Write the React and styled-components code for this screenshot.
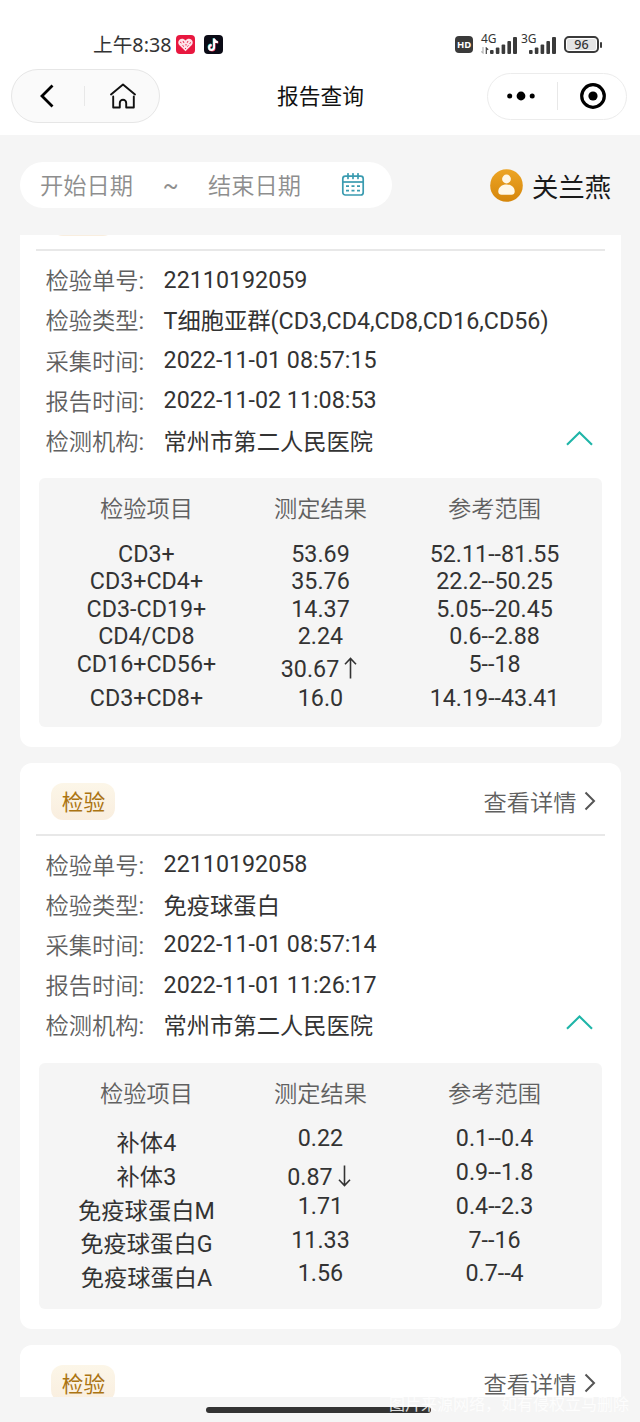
import React from 'react'
import styled, { createGlobalStyle } from 'styled-components';


const reports = [
  {
    no: '22110192059',
    type: 'T细胞亚群(CD3,CD4,CD8,CD16,CD56)',
    collected: '2022-11-01 08:57:15',
    reported: '2022-11-02 11:08:53',
    org: '常州市第二人民医院',
    items: [
      { name: 'CD3+', value: '53.69', range: '52.11--81.55' },
      { name: 'CD3+CD4+', value: '35.76', range: '22.2--50.25' },
      { name: 'CD3-CD19+', value: '14.37', range: '5.05--20.45' },
      { name: 'CD4/CD8', value: '2.24', range: '0.6--2.88' },
      { name: 'CD16+CD56+', value: '30.67', flag: 'up', range: '5--18' },
      { name: 'CD3+CD8+', value: '16.0', range: '14.19--43.41' },
    ],
  },
  {
    no: '22110192058',
    type: '免疫球蛋白',
    collected: '2022-11-01 08:57:14',
    reported: '2022-11-01 11:26:17',
    org: '常州市第二人民医院',
    items: [
      { name: '补体4', cjk: true, value: '0.22', range: '0.1--0.4' },
      { name: '补体3', cjk: true, value: '0.87', flag: 'down', range: '0.9--1.8' },
      { name: '免疫球蛋白M', cjk: true, value: '1.71', range: '0.4--2.3' },
      { name: '免疫球蛋白G', cjk: true, value: '11.33', range: '7--16' },
      { name: '免疫球蛋白A', cjk: true, value: '1.56', range: '0.7--4' },
    ],
  },
]

function Signal() {
  return (
    <svg width="27" height="17" viewBox="0 0 27 17" fill="#3a3a3a">
      <rect x="0" y="13" width="3.6" height="4" rx="1" />
      <rect x="5.8" y="10.5" width="3.6" height="6.5" rx="1" />
      <rect x="11.6" y="7.5" width="3.6" height="9.5" rx="1" />
      <rect x="17.4" y="4" width="3.6" height="13" rx="1" />
      <rect x="23" y="0" width="4" height="17" rx="1" />
    </svg>
  )
}

function StatusBar() {
  return (
    <Status>
      <Time>上午8:38</Time>
      <svg width="19" height="19" viewBox="0 0 19 19">
        <rect width="19" height="19" rx="4" fill="#e8173f" />
        <path d="M9.5 16.2 3.4 10.3C1.8 8.5 1.9 6 3.5 4.7c1.8-1.5 4.5-1.1 6 .9 1.5-2 4.2-2.4 6-.9 1.6 1.3 1.7 3.8.1 5.6z" fill="#fde3e8" />
        <path d="M4 7l1.5 1M7 6l1 2M12 6l-.8 1.800M15 7.500l-1.5 1M6.500 10.500l1.5 1M10 9v1.5M12.500 10.500l-1.2 1M9.500 13v1" stroke="#e8173f" strokeWidth="0.9" />
      </svg>
      <TikTok width="19" height="19" viewBox="0 0 19 19">
        <rect width="19" height="19" rx="4" fill="#0b0b16" />
        <g fill="none" strokeWidth="2">
          <path d="M9.6 3.2v8.9a2.5 2.5 0 1 1-2.5-2.5M9.6 3.4c.3 2 1.7 3.3 3.8 3.4" stroke="#35d6d6" />
          <path d="M10.6 4v8.9a2.5 2.5 0 1 1-2.5-2.5M10.6 4.2c.3 2 1.7 3.3 3.8 3.4" stroke="#f2385a" />
          <path d="M10.1 3.6v8.9a2.5 2.5 0 1 1-2.5-2.5M10.1 3.8c.3 2 1.7 3.3 3.8 3.4" stroke="#fff" />
        </g>
      </TikTok>
      <Hd>HD</Hd>
      <Network>
        <Generation>4G</Generation>
        <svg width="9" height="7" viewBox="0 0 9 7" fill="none" stroke="#444" strokeWidth="1.2">
          <path d="M2 0v6L.3 4.4" opacity=".4" />
          <path d="M5.3 7V1l1.9 1.8" />
        </svg>
        <Signal />
      </Network>
      <Network $second>
        <Generation>3G</Generation>
        <Signal />
      </Network>
      <Battery><Level>96</Level></Battery>
      <BatteryTip />
    </Status>
  )
}

function NavBar() {
  return (
    <Nav>
      <LeftCapsule>
        <svg width="14" height="24" viewBox="0 0 14 24" fill="none" stroke="#000" strokeWidth="2.8">
          <path d="M12.5 1.5 2 12l10.5 10.5" />
        </svg>
        <CapsuleLine $height="20px" $left="6px" />
        <svg width="28" height="26" viewBox="0 0 28 26" fill="none" stroke="#111" strokeWidth="1.9" strokeLinecap="round" strokeLinejoin="round">
          <path d="M2 11.5 14 1.5l12 10" />
          <path d="M4.2 13.5v11h6.6v-4.5a3.2 3.2 0 0 1 6.4 0v4.5h7.6v-11" />
        </svg>
      </LeftCapsule>
      <Title>报告查询</Title>
      <RightCapsule>
        <svg width="28" height="10" viewBox="0 0 28 10">
          <circle cx="2.7" cy="5" r="2.5" />
          <circle cx="14" cy="5" r="4.4" />
          <circle cx="25.2" cy="5" r="2.5" />
        </svg>
        <CapsuleLine $height="28px" />
        <svg width="26" height="26" viewBox="0 0 26 26">
          <circle cx="13" cy="13" r="11.3" fill="none" stroke="#000" strokeWidth="3.2" />
          <circle cx="13" cy="13" r="4.6" />
        </svg>
      </RightCapsule>
    </Nav>
  )
}

function FilterBar() {
  return (
    <Filter>
      <DatePill>
        <span>开始日期</span>
        <Tilde>~</Tilde>
        <span>结束日期</span>
        <svg width="24" height="24" viewBox="0 0 24 24" fill="none" stroke="#3a9bb0" strokeWidth="1.7">
          <rect x="1.8" y="3.2" width="20.4" height="18.8" rx="2.5" />
          <path d="M2 9h20" />
          <path d="M7 .8v4.7M12 .8v4.7M17 .8v4.7" strokeLinecap="round" />
          <path d="M5 13.2h3M10.5 13.2h3M16 13.2h3M5 17.6h3M10.5 17.6h3M16 17.6h3" />
        </svg>
      </DatePill>
      <Patient>
        <svg width="33" height="33" viewBox="0 0 33 33">
          <defs>
            <linearGradient id="avatar" x1="0" y1="0" x2="0" y2="1">
              <stop offset="0" stopColor="#eda525" />
              <stop offset="1" stopColor="#d5860b" />
            </linearGradient>
          </defs>
          <circle cx="16.5" cy="16.5" r="16.3" fill="url(#avatar)" />
          <circle cx="16.5" cy="10" r="4.4" fill="#fff8e8" />
          <path d="M8.3 22.5c0-4.3 3.5-7 8.2-7s8.2 2.700 8.2 7c0 2.300-1.3 3.300-3.2 3.300h-10c-1.9 0-3.2-1-3.2-3.300z" fill="#fff8e8" />
        </svg>
        关兰燕
      </Patient>
    </Filter>
  )
}

function CardHeader() {
  return (
    <CardTop>
      <Badge>检验</Badge>
      <Detail>
        查看详情
        <svg width="12" height="20" viewBox="0 0 12 20" fill="none" stroke="#555" strokeWidth="2">
          <path d="M1.5 1.5 10 10l-8.5 8.5" />
        </svg>
      </Detail>
    </CardTop>
  )
}

function Field({label, cjk, children}) {
  return (
    <FieldRow>
      <Label>{label}<Colon>:</Colon></Label>
      <Value $cjk={cjk}>{children}</Value>
    </FieldRow>
  )
}

function Arrow({flag}) {
  return (
    <ArrowIcon width="13" height="22" viewBox="0 0 13 22" fill="none" stroke="#333" strokeWidth="1.6">
      {flag === 'up'
        ? <path d="M6.5 21.5V1.5M1 7.2l5.5-5.7L12 7.2" />
        : <path d="M6.5 .5v20M1 14.8l5.5 5.7 5.5-5.7" />
      }
    </ArrowIcon>
  )
}

function ReportCard({report}) {
  return (
    <Card>
      <CardHeader />
      <Fields>
        <Field label="检验单号">{report.no}</Field>
        <Field label="检验类型" cjk>{report.type}</Field>
        <Field label="采集时间">{report.collected}</Field>
        <Field label="报告时间">{report.reported}</Field>
        <Field label="检测机构" cjk>
          {report.org}
          <Collapse width="27" height="15" viewBox="0 0 27 15" fill="none" stroke="#1fb5a8" strokeWidth="2.1">
            <path d="M1 13.8 13.5 1.5 26 13.8" />
          </Collapse>
        </Field>
      </Fields>
      <Results>
        <ResultRow $head>
          <Cell>检验项目</Cell>
          <Cell>测定结果</Cell>
          <Cell>参考范围</Cell>
        </ResultRow>
        {report.items.map(item => (
          <ResultRow key={item.name}>
            <Cell $tall={item.cjk}>{item.name}</Cell>
            <Cell $tall={item.flag}>{item.value}{item.flag && <Arrow flag={item.flag} />}</Cell>
            <Cell>{item.range}</Cell>
          </ResultRow>
        ))}
      </Results>
    </Card>
  )
}

export default function App() {
  return (
    <Page>
      <GlobalStyle />
      <StatusBar />
      <NavBar />
      <FilterBar />
      <List>
        <Cards>
          {reports.map(report => <ReportCard key={report.no} report={report} />)}
          <Card>
            <CardHeader />
          </Card>
        </Cards>
      </List>
      <Footer>
        <HomeBar />
        <Watermark>图片来源网络，如有侵权立马删除</Watermark>
      </Footer>
    </Page>
  )
}

const GlobalStyle = createGlobalStyle`
  * { box-sizing: border-box; }
  body { margin: 0; background: #f5f5f5; }
  svg { display: block; flex-shrink: 0; }
`;

const Page = styled.div`
  width: 640px;
  height: 1422px;
  overflow: hidden;
  background: #f5f5f5;
  font-family: Roboto, 'Noto Sans CJK SC', sans-serif;
  font-size: 23.27px;
  color: #333;
`;

const Status = styled.div`
  display: flex;
  align-items: center;
  height: 69px;
  padding: 20px 0 0 93px;
  background: #fff;
`;

const Time = styled.div`
  width: 83px;
  font-family: 'Noto Sans', 'Noto Sans CJK SC', sans-serif;
  font-size: 19.7px;
  line-height: 28px;
  white-space: nowrap;
`;

const TikTok = styled.svg`
  margin-left: 9px;
`;

const Hd = styled.div`
  width: 18px;
  height: 17px;
  margin-left: 232px;
  border-radius: 4px;
  background: #3a3a3a;
  color: #fff;
  font: bold 9.5px/17px 'Noto Sans', sans-serif;
  text-align: center;
`;

const Network = styled.div`
  display: flex;
  align-items: flex-end;
  position: relative;
  height: 18px;
  margin-left: ${props => props.$second ? '12px' : '8px'};
`;

const Generation = styled.span`
  position: absolute;
  top: -4px;
  left: 0;
  font: 12px/14px 'Noto Sans', sans-serif;

  ${Network} + ${Network} & {
    left: -8px;
  }
`;

const Battery = styled.div`
  width: 35px;
  height: 17px;
  margin-left: 8px;
  padding: 1px;
  border: 2px solid #3a3a3a;
  border-radius: 5px;
`;

const Level = styled.div`
  height: 11px;
  border-radius: 2px;
  background: #e4e4e4;
  font: 500 12.5px/11px 'Noto Sans', sans-serif;
  text-align: center;
`;

const BatteryTip = styled.div`
  width: 2px;
  height: 6px;
  margin-left: 1px;
  border-radius: 1px;
  background: #3a3a3a;
`;

const Nav = styled.div`
  display: flex;
  align-items: center;
  justify-content: space-between;
  height: 66px;
  padding: 0 13px 12px 11px;
  background: #fff;
`;

const LeftCapsule = styled.div`
  display: flex;
  align-items: center;
  justify-content: space-between;
  width: 149px;
  height: 54px;
  padding: 0 22px 0 28px;
  border: 1.5px solid #e6e6e6;
  border-radius: 27px;
  background: #fafafa;
`;

const RightCapsule = styled.div`
  display: flex;
  align-items: center;
  justify-content: space-between;
  width: 140px;
  height: 47px;
  padding: 0 20px 0 19px;
  border: 1px solid #ececec;
  border-radius: 24px;
`;

const CapsuleLine = styled.div`
  width: 1px;
  height: ${props => props.$height};
  margin-left: ${props => props.$left || 0};
  background: #e8e8e8;
`;

const Title = styled.div`
  color: #111;
  font-size: 21.7px;
  margin-right: 6px;
  padding-bottom: 3px;
`;

const Filter = styled.div`
  display: flex;
  align-items: center;
  justify-content: space-between;
  height: 100px;
  padding: 0 29px 0 20px;
`;

const DatePill = styled.div`
  display: flex;
  align-items: center;
  width: 372px;
  height: 46px;
  padding: 0 27px 0 20px;
  border-radius: 23px;
  background: #fff;
  color: #8e8e8e;
  font-weight: 350;

  span {
    padding-bottom: 2px;
  }

  svg {
    margin-left: auto;
  }
`;

const Tilde = styled.span`
  width: 75px;
  margin-top: 4px;
  font-weight: 400;
  text-align: center;
`;

const Patient = styled.div`
  display: flex;
  align-items: center;
  gap: 9px;
  color: #1a1a1a;
  font-size: 26.3px;
`;

const List = styled.div`
  height: 1162px;
  overflow: hidden;
`;

const Cards = styled.div`
  display: flex;
  flex-direction: column;
  gap: 16px;
  margin-top: -56px;
  padding: 0 19.4px 0 20.4px;
`;

const Card = styled.div`
  padding: 0 16px 20.4px;
  border-radius: 12px;
  background: #fff;
`;

const CardTop = styled.div`
  display: flex;
  align-items: center;
  justify-content: space-between;
  height: 72.3px;
  padding: 6px 9px 0 15px;
  border-bottom: 2px solid #e8e8e8;
`;

const Badge = styled.div`
  width: 64px;
  height: 37px;
  border-radius: 12px;
  background: linear-gradient(#fcf6e8, #f9eedf);
  color: #ab7412;
  font-size: 21.7px;
  line-height: 40px;
  text-align: center;
`;

const Detail = styled.div`
  display: flex;
  align-items: center;
  gap: 7px;
  color: #606060;
  font-weight: 350;
`;

const Fields = styled.div`
  padding: 9px 12px 0 9px;
`;

const FieldRow = styled.div`
  display: flex;
  height: 40.2px;
  line-height: 40px;
  white-space: nowrap;
`;

const Label = styled.div`
  width: 118.2px;
  padding-top: 1px;
  color: #606060;
  font-weight: 350;
`;

const Colon = styled.span`
  font-weight: 400;
`;

const Value = styled.div`
  flex: 1;
  display: flex;
  justify-content: space-between;
  margin-top: ${props => props.$cjk ? '1px' : '-0.5px'};
`;

const Collapse = styled.svg`
  margin-top: 9px;
`;

const Results = styled.div`
  margin: 17px 3px 0;
  padding: 8px 20px 14.8px;
  border-radius: 6px;
  background: #f5f5f5;
`;

const ResultRow = styled.div`
  display: grid;
  grid-template-columns: repeat(3, 1fr);
  text-align: center;

  ${props => props.$head && `
    height: 54.6px;
    padding-top: 10.2px;
    color: #606060;
    font-weight: 350;
  `}
`;

const Cell = styled.div`
  display: flex;
  justify-content: center;
  height: ${props => props.$tall ? '33.8px' : '27.5px'};
  padding-top: ${props => props.$tall ? '4.8px' : 0};
  line-height: 27.6px;
`;

const ArrowIcon = styled.svg`
  margin: 1px 3px 0 5px;
`;

const Footer = styled.div`
  position: relative;
  height: 25px;
  padding: 10px 0 0 206px;
`;

const HomeBar = styled.div`
  width: 225px;
  height: 6px;
  border-radius: 3px;
  background: #333;
`;

const Watermark = styled.div`
  position: absolute;
  top: -4px;
  left: 389px;
  color: #fff;
  font-size: 16px;
  line-height: 24px;
  opacity: 0.85;
  white-space: nowrap;
`;
